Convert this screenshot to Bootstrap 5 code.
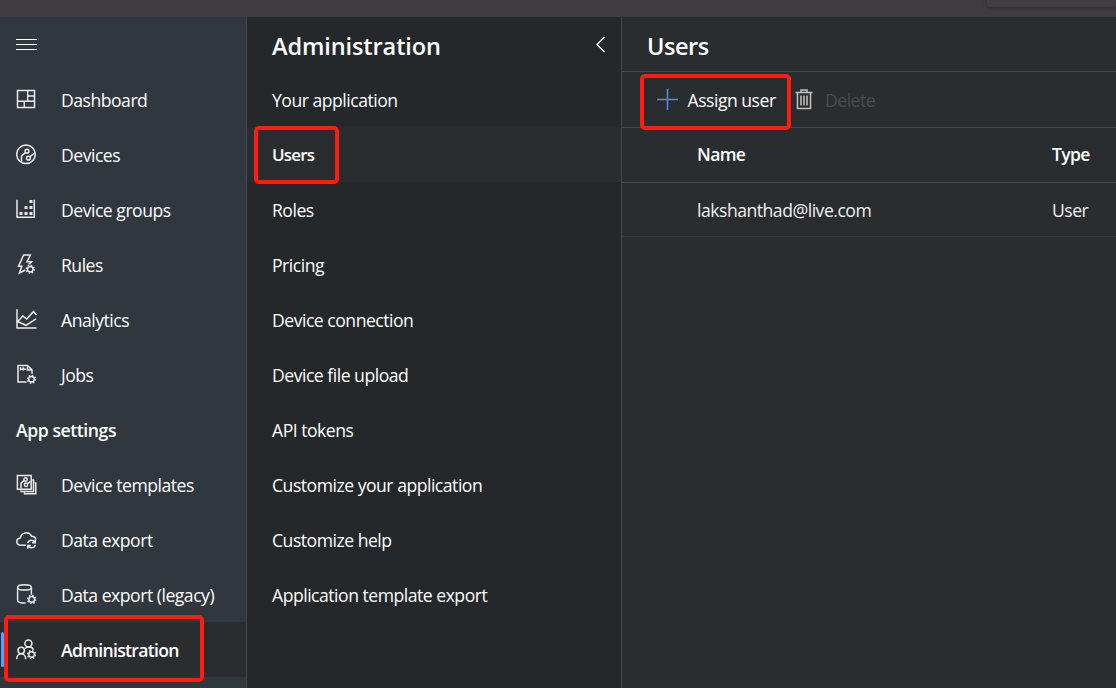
<!DOCTYPE html>
<html lang="en" data-bs-theme="dark">
<head>
<meta charset="utf-8">
<meta name="viewport" content="width=device-width, initial-scale=1">
<title>Administration - Users</title>
<link href="https://cdn.jsdelivr.net/npm/bootstrap@5.3.0/dist/css/bootstrap.min.css" rel="stylesheet">
<style>
body{font-family:"Open Sans","Noto Sans",sans-serif;font-size:17.6px;line-height:24px;letter-spacing:-.49px;color:#fff;background:#2a2d30;height:100vh}
.topbar{height:17px;background:#3f3c41}
.search-edge{right:0;top:-10px;width:129px;height:17px;background:#3f3c42;border-radius:3px;box-shadow:0 1px 4px rgba(0,0,0,.35)}
.side{width:247px;background:#31373f;border-right:1px solid #47474a}
.sub{width:375px;background:#25282b;border-right:1px solid #47474a}
.head{height:55px}
.item{height:55px;color:#fff;position:relative;white-space:nowrap}
.side .item{padding-left:16px}
.sub .item{padding-left:25px}
.item svg{width:21px;height:21px;margin:-1px 24px 0 0;flex:none}
.ico{fill:none;stroke:#ebebeb;stroke-width:1.5}
.item.active{background:#2a2d30;font-weight:600;letter-spacing:-.7px}
.sub .item.active{font-size:17px;letter-spacing:-.8px}
.section-title{font-weight:600;letter-spacing:-.42px}
.side .item.active::before{content:"";position:absolute;left:1px;top:10px;width:3px;height:35px;background:#5ba0ff;border-radius:2px}
h1,h2{font-size:23.5px;line-height:30px;font-weight:600;letter-spacing:-.1px;margin:0}
h2{letter-spacing:-.45px}
.ring::after{content:"";position:absolute;border:4.5px solid #ff1d12;border-radius:5px;left:var(--l);top:var(--t);width:var(--w);height:var(--h);z-index:2}
.ring-admin{--l:4px;--t:-7.5px;--w:199.5px;--h:67.5px}
.ring-users{--l:6.5px;--t:-.6px;--w:85px;--h:58px}
.ring-assign{--l:17.5px;--t:2.4px;--w:151px;--h:56px}
.rule{border-bottom:1px solid #47474a}
.tools{height:56px;padding-left:35px}
.tools svg{margin-top:-1px}
.assign{margin-left:9.5px;width:107.5px}
.del{margin-left:12px;color:#494b4d}
.grid-row{padding-left:75px}
.grid-row>:first-child{width:355px}
.grid-head{height:55px;font-weight:600;letter-spacing:-.65px;padding-bottom:2px}
.grid-item{height:54px;border-bottom:1px solid #363a3f;color:#f0f0f0}
</style>
</head>
<body class="d-flex flex-column overflow-hidden">
<svg class="d-none"><defs>
<symbol id="gear" viewBox="0 0 10 10" fill="none" stroke="#ebebeb"><circle cx="5" cy="5" r="2.9" stroke-width="1.5"/><circle cx="5" cy="5" r="4.2" stroke-width="1.5" stroke-dasharray="1.5 1.8"/></symbol>
</defs></svg>
<div class="topbar position-relative flex-shrink-0 overflow-hidden"><div class="search-edge position-absolute"></div></div>
<div class="d-flex flex-grow-1 overflow-hidden">
  <nav class="side flex-shrink-0">
    <div class="head d-flex ps-3"><svg width="21" height="13" style="margin-top:21px" shape-rendering="crispEdges"><path d="M0 1.5h20.5M0 6.5h20.5M0 11.5h20.5" stroke="#fff"/></svg></div>
    <div class="item d-flex align-items-center"><svg class="ico" viewBox="0 0 21 21"><path d="M1.5 1.5h17v17h-17zM11.7 1.500v10.700M1.500 12.200h17M11.700 7h6.800M8.300 12.200v6.300"/></svg>Dashboard</div>
    <div class="item d-flex align-items-center"><svg class="ico" viewBox="0 0 21 21"><circle cx="10" cy="10.300" r="9.300"/><circle cx="11" cy="7.200" r="1.900"/><circle cx="12.400" cy="14.200" r="1.900"/><path d="M9.500 8.700 5.500 12v6M13.800 12.800 19 8.500"/></svg>Devices</div>
    <div class="item d-flex align-items-center"><svg class="ico" viewBox="0 0 21 21"><path d="M1 .8v17.500h17.300V.8"/><path fill="#ebebeb" stroke="none" d="M13.500 1h3v3h-3zM8.500 7h3v3h-3zM13.500 7h3v3h-3zM3.500 13h3v3h-3zM8.500 13h3v3h-3zM13.500 13h3v3h-3z"/></svg>Device groups</div>
    <div class="item d-flex align-items-center"><svg class="ico" viewBox="0 0 21 21"><path d="M9.300 16 3.400 19l2.400-6.700H2.500L7.600 1h6.800L11 7.700h4.700L12.500 10.500"/><use href="#gear" x="9.500" y="10.500" width="9.500" height="9.500"/></svg>Rules</div>
    <div class="item d-flex align-items-center"><svg class="ico" viewBox="0 0 21 21"><path d="M1 .3v18.700h19.500M1.500 12.800 6.800 7l4 3L17.500 2.500l3 3.500M1.500 12.500l8.500 3.800 10-6.500"/></svg>Analytics</div>
    <div class="item d-flex align-items-center"><svg class="ico" viewBox="0 0 21 21"><path d="M10.500 18H2V1.400h9.500l4.500 4.500V9.700M11.500 1.400v4.500H16M4.500 3.200v3.200M7.200 3.200v3.200M3.800 5.200h6.500"/><use href="#gear" x="10.700" y="10.500" width="9.500" height="9.500"/></svg>Jobs</div>
    <div class="item section-title d-flex align-items-center">App settings</div>
    <div class="item d-flex align-items-center"><svg class="ico" viewBox="0 0 21 21"><path d="M1.400 1.400h13.800v13.800H1.400zM5 16.500v1.100h12.500V6h-1.300M8.500 18.500v1.300h11.300V9h-1.200"/><circle cx="9.600" cy="5.500" r="1.700"/><circle cx="10" cy="10.800" r="1.700"/><path d="M8 6.700 5 9.200v5.200M11.500 9.800l3-2.500"/></svg>Device templates</div>
    <div class="item d-flex align-items-center"><svg class="ico" viewBox="0 0 21 21"><path d="M9.800 16.300H4.700a3.700 3.700 0 0 1-.4-7.400A6 6 0 0 1 15.600 7.200c2.300.1 4 1.400 4.200 3.300"/><path d="M11.600 14a4 4 0 0 1 7.300-.7M19.300 10.500v3.200h-3.200M19.400 15.900a4 4 0 0 1-7.400.8M11.700 19.700v-3.300h3.200"/></svg>Data export</div>
    <div class="item d-flex align-items-center"><svg class="ico" viewBox="0 0 21 21"><ellipse cx="8.500" cy="3.400" rx="6.900" ry="2.600"/><path d="M1.600 3.400v13c0 1.500 3 2.600 8 2.700M15.400 3.400v7.300"/><use href="#gear" x="10.800" y="10.500" width="9.800" height="9.800"/></svg>Data export (legacy)</div>
    <div class="item active ring ring-admin d-flex align-items-center"><svg class="ico" viewBox="0 0 21 21"><circle cx="12.400" cy="4.400" r="3.500"/><circle cx="5.200" cy="11.500" r="3.200"/><path d="M.7 20.300c0-7.300 9-7.300 9 0M9 9.500c2.500-2.300 7.500-2 8.300 1.200"/><use href="#gear" x="10.800" y="10.800" width="9.500" height="9.500"/></svg>Administration</div>
  </nav>
  <nav class="sub flex-shrink-0">
    <div class="head d-flex justify-content-between" style="padding:14px 15px 0 25px"><h1>Administration</h1><svg width="11" height="17" style="margin-top:5px"><path d="M9.500 1 2 8.500 9.500 16" fill="none" stroke="#fff" stroke-width="1.300"/></svg></div>
    <div class="item d-flex align-items-center">Your application</div>
    <div class="item active ring ring-users d-flex align-items-center">Users</div>
    <div class="item d-flex align-items-center">Roles</div>
    <div class="item d-flex align-items-center">Pricing</div>
    <div class="item d-flex align-items-center">Device connection</div>
    <div class="item d-flex align-items-center">Device file upload</div>
    <div class="item d-flex align-items-center">API tokens</div>
    <div class="item d-flex align-items-center">Customize your application</div>
    <div class="item d-flex align-items-center">Customize help</div>
    <div class="item d-flex align-items-center">Application template export</div>
  </nav>
  <main class="flex-grow-1">
    <div class="head rule" style="padding:14px 0 0 25px"><h2>Users</h2></div>
    <div class="tools rule ring ring-assign position-relative d-flex align-items-center">
      <svg width="21" height="21"><path d="M0 10.500h21M10.500 0v21" stroke="#4f8df0" stroke-width="1.500"/></svg>
      <span class="assign">Assign user</span>
      <svg width="18" height="21" fill="none" stroke="#c4c2c0" stroke-width="1.500"><path d="M.5 3.500h17M6 3V1h6v2M2.500 3.500v16h13v-16M6 6.500v10M9 6.500v10M12 6.500v10"/></svg>
      <span class="del">Delete</span>
    </div>
    <div class="grid-row grid-head rule d-flex align-items-center"><span>Name</span><span>Type</span></div>
    <div class="grid-row grid-item d-flex align-items-center"><span>lakshanthad@live.com</span><span>User</span></div>
  </main>
</div>
<script src="https://cdn.jsdelivr.net/npm/bootstrap@5.3.0/dist/js/bootstrap.bundle.min.js"></script>
</body>
</html>
